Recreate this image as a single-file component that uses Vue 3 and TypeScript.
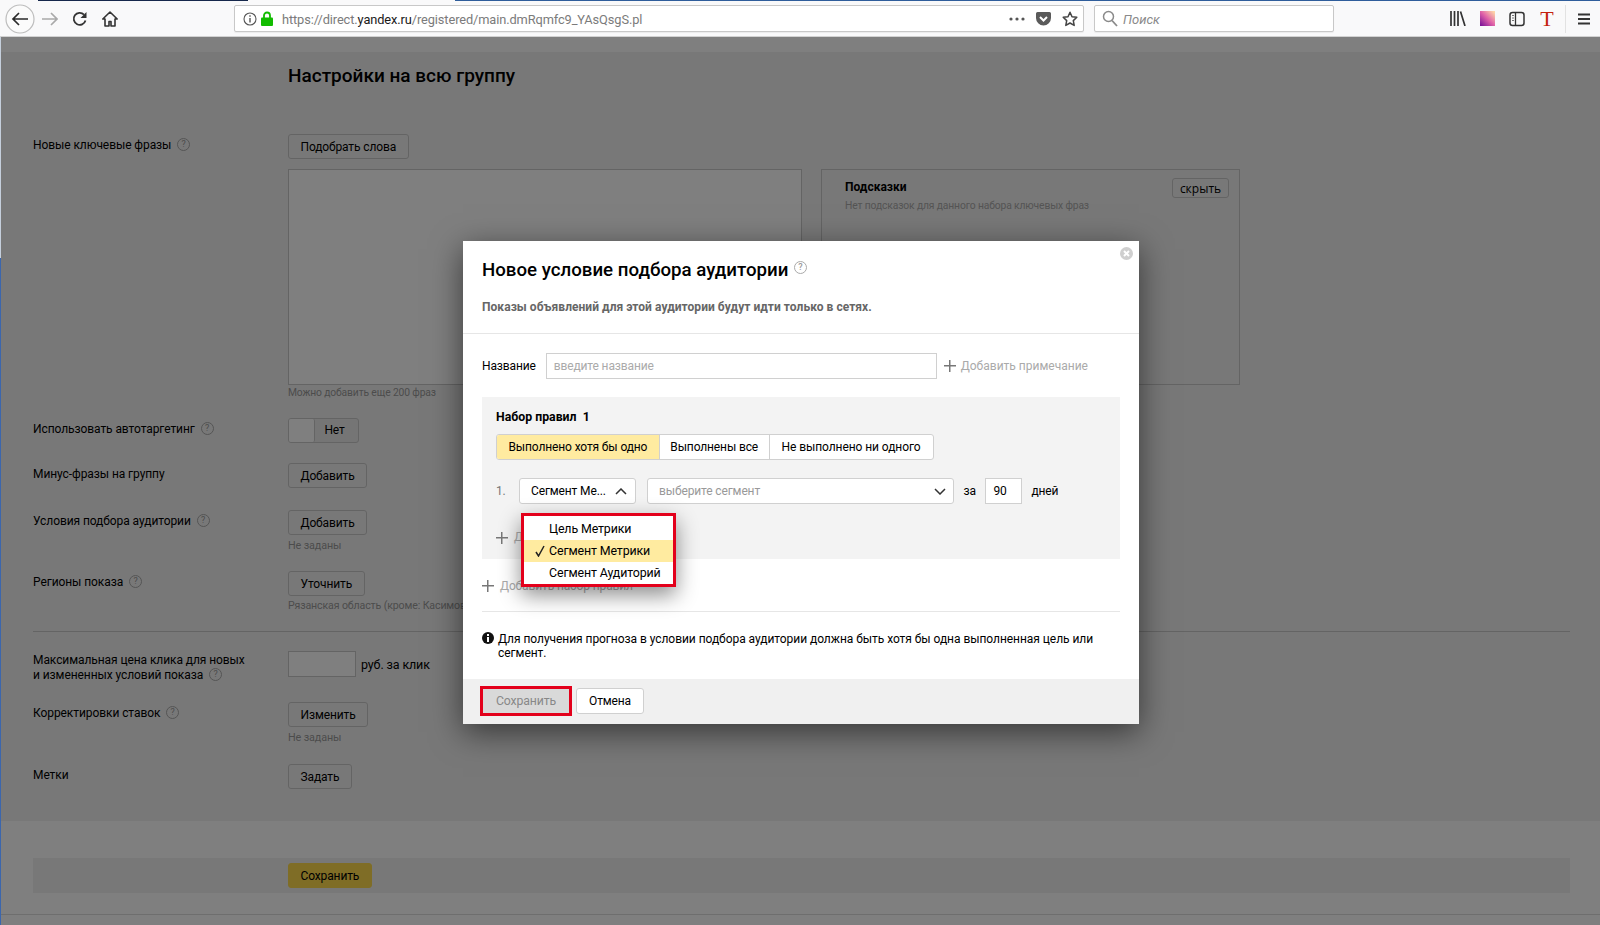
<script setup lang="ts">
const ruleModes = [
  { label: 'Выполнено хотя бы одно', active: true },
  { label: 'Выполнены все', active: false },
  { label: 'Не выполнено ни одного', active: false },
]
const segmentTypes = [
  { label: 'Цель Метрики', checked: false },
  { label: 'Сегмент Метрики', checked: true },
  { label: 'Сегмент Аудиторий', checked: false },
]
</script>

<template>
  <div class="app">
    <div class="tabstrip">
      <i class="ts-a"></i><i class="ts-b"></i><i class="ts-c"></i><i class="ts-d"></i>
    </div>
    <header class="toolbar">
      <svg class="back" width="30" height="30" viewBox="0 0 30 30">
        <circle cx="15" cy="15" r="14" fill="#fbfbfb" stroke="#bdbdbd" stroke-width="1.2" />
        <path d="M23 15H8M14 9l-6 6 6 6" fill="none" stroke="#2b2b2b" stroke-width="1.7" />
      </svg>
      <svg class="ic fwd" width="16" height="16" viewBox="0 0 16 16">
        <path d="M0 8h15M9 2l6 6-6 6" fill="none" stroke="#a9a9a9" stroke-width="1.7" />
      </svg>
      <svg class="ic reload" width="16" height="16" viewBox="0 0 16 16">
        <path d="M13.5 9.5A6 6 0 1 1 12 3.6" fill="none" stroke="#333" stroke-width="1.8" />
        <path d="M14.5 1v6h-6z" fill="#333" />
      </svg>
      <svg class="ic home" width="16" height="16" viewBox="0 0 16 16">
        <path d="M8 1 .8 8h2.2v7h4V10.500h2V15h4V8h2.200z" fill="none" stroke="#333" stroke-width="1.600" stroke-linejoin="round" />
      </svg>

      <div class="urlbar">
        <svg class="u-info" width="14" height="14" viewBox="0 0 14 14">
          <circle cx="7" cy="7" r="6" fill="none" stroke="#555" stroke-width="1.100" />
          <path d="M6.300 6h1.400v4.500H6.300zM6.300 3.300h1.400v1.500H6.300z" fill="#555" />
        </svg>
        <svg class="u-lock" width="12" height="15" viewBox="0 0 12 15">
          <path d="M3 7V4.500a3 3 0 0 1 6 0V7" fill="none" stroke="#12bc00" stroke-width="1.800" />
          <rect x="0" y="6.500" width="12" height="8.500" rx="1" fill="#12bc00" />
        </svg>
        <span class="url">https://direct.<b>yandex.ru</b>/registered/main.dmRqmfc9_YAsQsgS.pl</span>
        <svg class="u-dots" width="16" height="4" viewBox="0 0 16 4">
          <circle cx="2" cy="2" r="1.600" fill="#555" /><circle cx="8" cy="2" r="1.600" fill="#555" /><circle cx="14" cy="2" r="1.600" fill="#555" />
        </svg>
        <svg class="u-pocket" width="15" height="15" viewBox="0 0 15 15">
          <path d="M1.500 1h12A1.500 1.500 0 0 1 15 2.500V7a7.500 7.500 0 0 1-15 0V2.500A1.500 1.500 0 0 1 1.500 1z" fill="#5a5a5a" />
          <path d="M4 6l3.500 3.500L11 6" fill="none" stroke="#fff" stroke-width="2" />
        </svg>
        <svg class="u-star" width="16" height="16" viewBox="0 0 16 16">
          <path d="M8 1.300l2 4.400 4.800.6-3.500 3.300.9 4.800L8 12l-4.200 2.400.9-4.800L1.200 6.300 6 5.700z" fill="none" stroke="#444" stroke-width="1.500" stroke-linejoin="round" />
        </svg>
      </div>

      <div class="searchbar">
        <svg width="16" height="17" viewBox="0 0 16 17">
          <circle cx="6.500" cy="6.500" r="5" fill="none" stroke="#8a8a8a" stroke-width="1.500" />
          <path d="M10 10.500l5 5.500" stroke="#8a8a8a" stroke-width="1.800" />
        </svg>
        <span>Поиск</span>
      </div>

      <svg class="ic lib" width="16" height="15" viewBox="0 0 16 15">
        <path d="M1 0v15M4.500 0v15M8 0v15M10.500 .500l4.500 14.500" fill="none" stroke="#333" stroke-width="1.700" />
      </svg>
      <i class="swatch"></i>
      <svg class="ic side" width="16" height="16" viewBox="0 0 16 16">
        <rect x="1" y="1.500" width="14" height="13" rx="2.500" fill="none" stroke="#333" stroke-width="1.500" />
        <path d="M6.500 1.500v13" stroke="#333" stroke-width="1.300" />
        <path d="M3 4.500h2M3 7h2M3 9.500h2" stroke="#777" stroke-width="1" />
      </svg>
      <span class="t-ext">T</span>
      <i class="tb-sep"></i>
      <svg class="ic burger" width="14" height="12" viewBox="0 0 14 12">
        <path d="M1 1.500h12M1 6h12M1 10.500h12" stroke="#333" stroke-width="1.800" />
      </svg>
    </header>

    <div class="viewport">
      <div class="sliver"></div>
      <div class="topgap"></div>

      <main class="main">
        <h2 class="group-title">Настройки на всю группу</h2>

        <section class="row r-words">
          <div class="label">Новые ключевые фразы <span class="help">?</span></div>
          <div class="ctrl">
            <button class="btn">Подобрать слова</button>
            <div class="editors">
              <div class="textarea"></div>
              <div class="hints">
                <button class="btn-hide">скрыть</button>
                <div class="hints-title">Подсказки</div>
                <div class="hints-note">Нет подсказок для данного набора ключевых фраз</div>
              </div>
            </div>
            <div class="note note-words">Можно добавить еще 200 фраз</div>
          </div>
        </section>

        <section class="row r-auto">
          <div class="label">Использовать автотаргетинг <span class="help">?</span></div>
          <div class="toggle"><i></i><span>Нет</span></div>
        </section>

        <section class="row r-minus">
          <div class="label">Минус-фразы на группу</div>
          <button class="btn">Добавить</button>
        </section>

        <section class="row r-aud">
          <div class="label">Условия подбора аудитории <span class="help">?</span></div>
          <div class="ctrl">
            <button class="btn">Добавить</button>
            <div class="note">Не заданы</div>
          </div>
        </section>

        <section class="row r-region">
          <div class="label">Регионы показа <span class="help">?</span></div>
          <div class="ctrl">
            <button class="btn">Уточнить</button>
            <div class="note note-region">Рязанская область (кроме: Касимов)</div>
          </div>
        </section>

        <hr class="rule-line" />

        <section class="row r-price">
          <div class="label two">Максимальная цена клика для новых<br />и измененных условий показа <span class="help">?</span></div>
          <div class="price"><div class="price-input"></div><span>руб. за клик</span></div>
        </section>

        <section class="row r-bids">
          <div class="label">Корректировки ставок <span class="help">?</span></div>
          <div class="ctrl">
            <button class="btn">Изменить</button>
            <div class="note">Не заданы</div>
          </div>
        </section>

        <section class="row r-tags">
          <div class="label">Метки</div>
          <button class="btn">Задать</button>
        </section>
      </main>

      <footer class="page-foot">
        <div class="foot-band"><button class="btn btn-primary">Сохранить</button></div>
        <div class="foot-line"></div>
      </footer>

      <div class="overlay"></div>

      <div class="modal">
        <svg class="close" width="13" height="13" viewBox="0 0 13 13">
          <circle cx="6.500" cy="6.500" r="6.500" fill="#cfcfcf" />
          <path d="M4 4l5 5M9 4l-5 5" stroke="#fff" stroke-width="2" />
        </svg>
        <div class="m-head">
          <h3>Новое условие подбора аудитории <span class="help help-m">?</span></h3>
          <p>Показы объявлений для этой аудитории будут идти только в сетях.</p>
        </div>
        <div class="m-body">
          <div class="name-row">
            <span>Название</span>
            <div class="field name-field">введите название</div>
            <a class="add add-note"><i class="plus"></i>Добавить примечание</a>
          </div>

          <div class="panel">
            <div class="panel-title">Набор правил&nbsp; 1</div>
            <div class="seg">
              <span v-for="m in ruleModes" :key="m.label" :class="{ on: m.active }">{{ m.label }}</span>
            </div>
            <div class="cond">
              <span class="cond-num">1.</span>
              <div class="select select-type">
                <span>Сегмент Ме...</span>
                <svg width="12" height="7" viewBox="0 0 12 7"><path d="M1 6l5-5 5 5" fill="none" stroke="#333" stroke-width="1.500" /></svg>
                <div class="menu">
                  <div v-for="s in segmentTypes" :key="s.label" class="menu-item" :class="{ on: s.checked }">
                    <svg v-if="s.checked" class="tick" width="10" height="12" viewBox="0 0 10 12"><path d="M1 7l2.500 4L9 1" fill="none" stroke="#222" stroke-width="1.500" /></svg>
                    {{ s.label }}
                  </div>
                </div>
              </div>
              <div class="select select-seg">
                <span>выберите сегмент</span>
                <svg width="12" height="7" viewBox="0 0 12 7"><path d="M1 1l5 5 5-5" fill="none" stroke="#333" stroke-width="1.500" /></svg>
              </div>
              <span class="cond-za">за</span>
              <div class="field days">90</div>
              <span class="cond-days">дней</span>
            </div>
            <a class="add add-rule"><i class="plus"></i>Добавить правило</a>
          </div>

          <a class="add add-set"><i class="plus"></i>Добавить набор правил</a>
          <div class="m-line"></div>
          <div class="info">
            <svg width="12" height="12" viewBox="0 0 12 12">
              <circle cx="6" cy="6" r="6" fill="#111" />
              <path d="M5 5h2v5H5zM5 2h2v2H5z" fill="#fff" />
            </svg>
            <span>Для получения прогноза в условии подбора аудитории должна быть хотя бы одна выполненная цель или сегмент.</span>
          </div>
        </div>
        <div class="m-foot">
          <button class="btn btn-save">Сохранить</button>
          <button class="btn btn-cancel">Отмена</button>
        </div>
      </div>
    </div>
  </div>
</template>

<style>
html, body { margin: 0; background: #fff; overflow: hidden; }
</style>

<style scoped>
.app {
  width: 1600px;
  height: 925px;
  overflow: hidden;
  display: flex;
  flex-direction: column;
  font-family: Roboto, "Liberation Sans", sans-serif;
  font-size: 12px;
  letter-spacing: -.13px;
  color: #000;
}

/* browser chrome */
.tabstrip { display: flex; height: 1px; background: #f9f9fa; }
.tabstrip i { display: block; height: 1px; }
.ts-a { width: 38px; background: #f9f9fa; }
.ts-b { width: 210px; background: #16284c; }
.ts-c { width: 207px; background: #f9f9fa; }
.ts-d { flex: 1; background: #2f5d9b; }
.toolbar {
  height: 35px;
  box-sizing: content-box;
  display: flex;
  align-items: center;
  padding-left: 5px;
  background: #f9f9fa;
  border-bottom: 1px solid #d2d2d2;
  letter-spacing: 0;
}
.ic { flex: none; }
.back { flex: none; }
.fwd { margin-left: 7px; }
.reload { margin-left: 14px; }
.home { margin-left: 14px; }
.urlbar, .searchbar {
  height: 27px;
  box-sizing: border-box;
  display: flex;
  align-items: center;
  background: #fff;
  border: 1px solid #c8c8c8;
  border-radius: 2px;
  box-shadow: 0 1px 1px rgba(0,0,0,.06);
}
.urlbar { width: 850px; margin-left: 116px; padding-left: 8px; }
.u-lock { margin-left: 4px; }
.url { margin-left: 9px; padding-top: 1px; font-size: 12.800px; letter-spacing: -.1px; color: #7b7b7b; white-space: nowrap; }
.url b { font-weight: 400; color: #1a1a1a; }
.u-dots { margin-left: auto; }
.u-pocket { margin-left: 11px; }
.u-star { margin-left: 11px; margin-right: 5px; }
.searchbar { width: 240px; margin-left: 10px; padding-left: 7px; }
.searchbar span { margin-left: 5px; padding-top: 1px; font-style: italic; font-size: 13px; color: #8a8a8a; }
.lib { margin-left: 116px; }
.swatch {
  width: 15px;
  height: 15px;
  margin-left: 14px;
  background: linear-gradient(45deg, #7d1497 5%, #e062a8 50%, #ffd9a8 95%);
}
.side { margin-left: 14px; }
.t-ext {
  width: 14px;
  margin-left: 15px;
  font: 22px/1 "Liberation Serif", serif;
  color: #c4210e;
  text-align: center;
}
.tb-sep { width: 1px; height: 28px; margin-left: 11px; background: #e2e2e2; }
.burger { margin-left: 11px; }

/* page under the overlay */
.viewport { position: relative; flex: 1; background: #fff; overflow: hidden; }
.sliver {
  position: absolute;
  left: 0;
  top: 0;
  bottom: 0;
  width: 1px;
  z-index: 3;
  background: linear-gradient(#c5cfdc 221px, #3b66ad 221px);
}
.topgap { height: 15px; }
.main { background: #f1f1f1; padding: 12px 30px 32px 33px; }
.group-title { margin: 0; font-size: 19px; line-height: 24px; font-weight: 500; letter-spacing: 0; padding-left: 255px; }
.row { display: flex; align-items: flex-start; }
.label { width: 255px; flex: none; padding-top: 3.500px; line-height: 15px; letter-spacing: -.08px; white-space: nowrap; }
.label.two { padding-top: 2px; }
.ctrl { display: flex; flex-direction: column; align-items: flex-start; }
.help {
  display: inline-block;
  width: 11px;
  height: 11px;
  margin-left: 3px;
  border: 1px solid #aaa;
  border-radius: 50%;
  font-size: 9px;
  line-height: 11px;
  text-align: center;
  color: #999;
  vertical-align: 2px;
  letter-spacing: 0;
}
.btn {
  height: 25px;
  padding: 0 11.500px;
  box-sizing: border-box;
  border: 1px solid #c8c8c8;
  border-radius: 3px;
  background: transparent;
  color: #000;
  font: inherit;
  letter-spacing: inherit;
  white-space: nowrap;
}
.note { margin-top: 4px; font-size: 10.800px; line-height: 14px; color: #999; white-space: nowrap; }
.note-words { margin-top: 1px; font-size: 10.300px; }
.note-region { margin-top: 3px; font-size: 10.600px; }
.r-words { margin-top: 46px; }
.editors { display: flex; gap: 19px; margin-top: 10px; height: 216px; }
.textarea { width: 514px; box-sizing: border-box; background: #fff; border: 1px solid #c8c8c8; }
.hints {
  position: relative;
  width: 419px;
  box-sizing: border-box;
  padding: 9px 23px;
  border: 1px solid #c8c8c8;
}
.hints-title { font-weight: 700; font-size: 12px; line-height: 16px; letter-spacing: 0; }
.hints-note { margin-top: 4px; font-size: 10.300px; line-height: 14px; color: #aaa; white-space: nowrap; }
.btn-hide {
  position: absolute;
  top: 8px;
  right: 10px;
  width: 57px;
  height: 20px;
  padding: 0;
  border: 1px solid #c8c8c8;
  border-radius: 3px;
  background: transparent;
  font: 12px "Open Sans", sans-serif;
  color: #000;
}
.r-auto { margin-top: 18px; }
.toggle {
  display: flex;
  width: 71px;
  height: 25px;
  box-sizing: border-box;
  border: 1px solid #c8c8c8;
  border-radius: 3px;
  background: #ebebeb;
}
.toggle i { width: 25px; background: #fff; border-right: 1px solid #c8c8c8; border-radius: 2px; }
.toggle span { flex: 1; padding-right: 4px; text-align: center; line-height: 23px; }
.r-minus { margin-top: 20px; }
.r-aud { margin-top: 22px; }
.r-region { margin-top: 18px; }
.rule-line { margin: 18px 0 0; border: 0; border-top: 1px solid #c8c8c8; }
.r-price { margin-top: 19px; }
.price { display: flex; align-items: center; gap: 5px; font-size: 12.500px; }
.price-input { width: 68px; height: 26px; box-sizing: border-box; background: #fff; border: 1px solid #c8c8c8; }
.r-bids { margin-top: 19px; }
.r-tags { margin-top: 19px; }

.page-foot { padding-top: 37px; }
.foot-band {
  display: flex;
  align-items: center;
  height: 35px;
  margin: 0 30px 0 33px;
  padding-left: 255px;
  background: #f1f1f1;
}
.btn-primary { background: #ffdb4d; border-color: #ffdb4d; }
.foot-line { margin-top: 21px; border-top: 1px solid #ddd; }

.overlay { position: absolute; inset: 0; background: rgba(0, 0, 0, .5); }

/* modal */
.modal {
  position: absolute;
  left: 463px;
  top: 204px;
  width: 676px;
  background: #fff;
  box-shadow: 0 8px 30px rgba(0, 0, 0, .55);
}
.close { position: absolute; top: 6px; right: 6px; }
.m-head { padding: 17px 19px 18px; border-bottom: 1px solid #e6e6e6; }
.m-head h3 { margin: 0; font-size: 18.700px; line-height: 24px; font-weight: 500; letter-spacing: 0; }
.help-m { vertical-align: 6px; margin-left: 1px; }
.m-head p { margin: 18px 0 0; font-size: 12px; line-height: 15px; font-weight: 700; color: #666; letter-spacing: .05px; }
.m-body { padding: 19px 19px 19px 19px; }
.name-row { display: flex; align-items: center; }
.field { box-sizing: border-box; height: 26px; background: #fff; border: 1px solid #d0d0d0; line-height: 24px; }
.name-field { width: 391px; margin-left: 10px; padding-left: 7px; color: #aaa; }
.add { display: flex; align-items: center; color: #aaa; line-height: 15px; }
.plus {
  width: 12px;
  height: 12px;
  margin-right: 6px;
  flex: none;
  background:
    linear-gradient(#777, #777) center / 12px 1.500px no-repeat,
    linear-gradient(#777, #777) center / 1.500px 12px no-repeat;
}
.add-note { margin-left: 7px; letter-spacing: 0; }
.add-note .plus { margin-right: 5px; }
.panel { margin-top: 18px; padding: 12px 14px 13px; background: #f3f3f3; height: 162px; box-sizing: border-box; }
.panel-title { font-size: 12.300px; font-weight: 700; line-height: 16px; letter-spacing: 0; }
.seg {
  display: inline-flex;
  height: 26px;
  margin-top: 9px;
  box-sizing: border-box;
  background: #fff;
  border: 1px solid #d0d0d0;
  border-radius: 3px;
  line-height: 24px;
}
.seg span { padding: 0 11.500px; border-left: 1px solid #d0d0d0; white-space: nowrap; }
.seg span:first-child { border-left: 0; border-radius: 2px 0 0 2px; }
.seg span:nth-child(2) { padding: 0 10.500px; }
.seg span:nth-child(3) { padding: 0 12px; letter-spacing: -.08px; }
.seg .on { background: #ffeba0; }
.cond { display: flex; align-items: center; margin-top: 18px; }
.cond-num { width: 23px; color: #777; }
.select {
  position: relative;
  display: flex;
  align-items: center;
  justify-content: space-between;
  height: 26px;
  box-sizing: border-box;
  padding: 0 8px 0 11px;
  background: #fff;
  border: 1px solid #d0d0d0;
  border-radius: 3px;
  white-space: nowrap;
}
.select-type { width: 117px; }
.select-seg { width: 307px; margin-left: 11px; padding-right: 7px; color: #999; }
.cond-za { margin-left: 9.500px; }
.days { width: 37px; margin-left: 9.500px; padding-left: 7px; }
.cond-days { margin-left: 9px; }
.menu {
  position: absolute;
  z-index: 2;
  left: 1px;
  top: 34px;
  width: 155px;
  box-sizing: border-box;
  padding-top: 2px;
  border: 3px solid #e3001b;
  background: #fff;
  color: #000;
  font-size: 12.400px;
  box-shadow: 0 8px 20px rgba(0, 0, 0, .45);
}
.menu-item { position: relative; height: 22px; line-height: 22px; padding-left: 25px; }
.menu-item.on { background: #ffeba0; }
.tick { position: absolute; left: 11px; top: 5px; }
.add-rule { margin-top: 26px; }
.add-set { margin-top: 19.500px; }
.m-line { margin-top: 17px; border-top: 1px solid #e6e6e6; }
.info { display: flex; gap: 4px; margin-top: 20px; line-height: 14px; letter-spacing: -.05px; }
.info svg { flex: none; }
.m-foot { display: flex; align-items: center; height: 45px; padding-left: 20px; background: #f0f0f0; }
.btn-save {
  width: 86px;
  height: 24px;
  background: #d9d9d9;
  border-color: #d9d9d9;
  border-radius: 0;
  color: #888;
  font-size: 12.300px;
  outline: 3px solid #e3001b;
  padding: 0;
}
.btn-cancel { margin-left: 7px; width: 68px; height: 26px; padding: 0; background: #fff; border-color: #d0d0d0; }
</style>
